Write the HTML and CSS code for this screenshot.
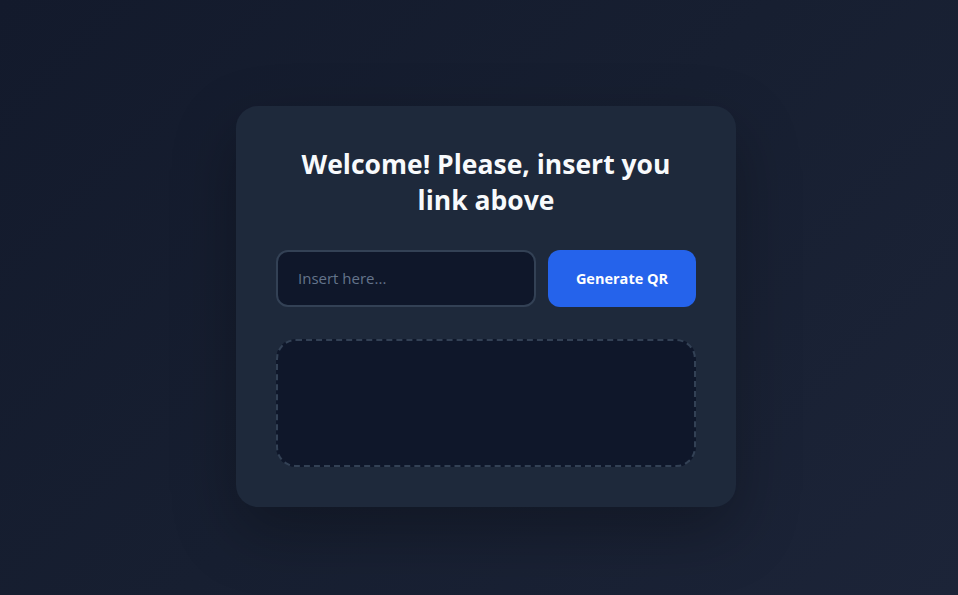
FILE: index.html
```html
<!DOCTYPE html>
<html lang="en">
<head>
<meta charset="utf-8">
<title>QR Generator</title>
<link rel="stylesheet" href="styles.css">
</head>
<body>
  <main class="card">
    <h1 class="title">Welcome! Please, insert you link above</h1>
    <div class="form-row">
      <input class="link-input" type="text" placeholder="Insert here...">
      <button class="generate-btn" type="button">Generate QR</button>
    </div>
    <div class="qr-box"></div>
  </main>
</body>
</html>
```
FILE: styles.css
```css
* { box-sizing: border-box; }
html, body { height: 100%; }
body {
  margin: 0;
  min-height: 100vh;
  display: flex;
  align-items: center;
  justify-content: center;
  padding: 17px 0 0 14px;
  background: linear-gradient(135deg, #131a2c 0%, #171f31 50%, #1c2438 100%);
  font-family: "Open Sans", "Noto Sans", sans-serif;
}
.card {
  width: 500px;
  padding: 40px;
  background: #1e293b;
  border-radius: 22px;
  box-shadow: 0 24px 64px rgba(0, 0, 0, 0.28);
}
.title {
  margin: 0 0 32px;
  padding: 0 10px;
  text-align: center;
  color: #f8fafc;
  font-size: 26.5px;
  line-height: 36px;
  font-weight: 700;
  letter-spacing: 0;
}
.form-row {
  display: flex;
  gap: 12px;
}
.link-input {
  flex: 1;
  min-width: 0;
  height: 57px;
  padding: 0 20px;
  background: #0f172a;
  border: 2px solid #334155;
  border-radius: 12px;
  color: #e2e8f0;
  font-family: "Open Sans", "Noto Sans", sans-serif;
  font-size: 15px;
  outline: none;
}
.link-input::placeholder { color: #64748b; }
.generate-btn {
  width: 148px;
  height: 57px;
  border: none;
  border-radius: 12px;
  background: #2563eb;
  color: #ffffff;
  font-family: "Open Sans", "Noto Sans", sans-serif;
  font-size: 14.5px;
  font-weight: 700;
}
.qr-box {
  margin-top: 32px;
  height: 128px;
  background: #0f172a;
  border: 2px dashed #334155;
  border-radius: 20px;
}
```
